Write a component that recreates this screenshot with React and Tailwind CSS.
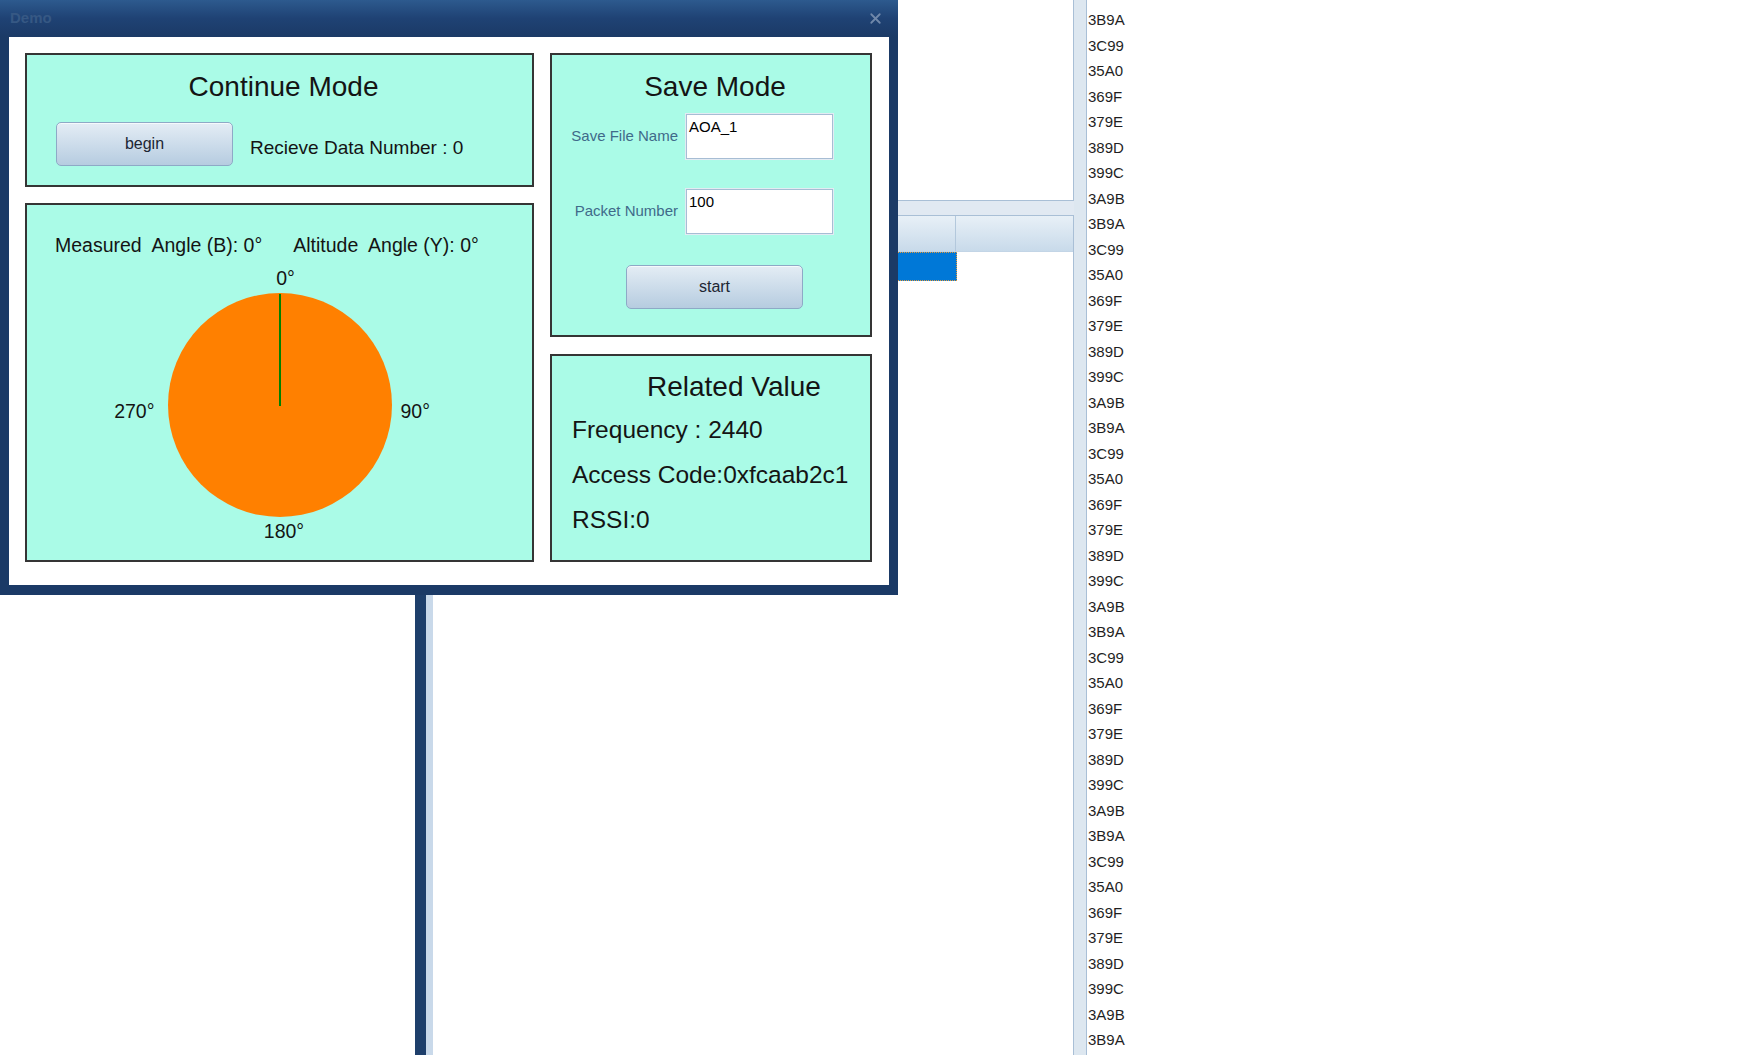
import { X } from "lucide-react";

const HEX = ["3B9A", "3C99", "35A0", "369F", "379E", "389D", "399C", "3A9B"];

const panel = "border-2 border-[#353535] bg-[#aafbe7]";
const btn =
  "flex h-[44px] w-[177px] items-center justify-center rounded-[5px] border border-[#8ea9c6] bg-gradient-to-b from-[#e4edf5] to-[#b6cce0] text-[16px] text-[#1c2633] shadow-[inset_0_1px_0_#f6f9fc]";
const textbox =
  "h-[45px] w-[147px] border border-[#a7bdd4] bg-white pl-[2px] pt-[3px] text-[15px] leading-[18px] text-black shadow-[0_0_0_1px_#e3ebf3]";

function Compass() {
  return (
    <svg width="224" height="224" viewBox="0 0 224 224">
      <circle cx="112" cy="112" r="112" fill="#ff8000" />
      <line x1="112" y1="1" x2="112" y2="113" stroke="#008000" strokeWidth="2" />
    </svg>
  );
}

export default function App() {
  const rows = Array.from({ length: 41 }, (_, i) => HEX[i % 8]);

  return (
    <div className="relative h-[1055px] w-[1755px] overflow-hidden bg-white font-['Liberation_Sans',Arial,sans-serif] text-[#141414]">
      {/* host app behind the dialog */}
      <div className="flex h-full">
        <div className="flex w-[1074px] flex-col bg-[#e1e9f2]">
          <div className="h-[201px] border-b border-r border-[#a9bfd6] bg-white" />
          <div className="h-[14px]" />
          <div className="flex flex-1 flex-col border-r border-t border-[#a9bfd6] bg-white">
            <div className="flex h-[36px] border-b border-[#c3d5e6] bg-gradient-to-b from-[#e8f0f7] to-[#c8daea]">
              <div className="w-[956px] border-r border-[#b3c8dc]" />
              <div className="flex-1" />
            </div>
            <div className="flex h-[29px]">
              <div className="w-[857px]" />
              <div className="w-[100px] border border-dotted border-[#e59a3c] bg-[#0078d7]" />
            </div>
            <div className="flex flex-1">
              <div className="w-[415px]" />
              <div className="w-[11px] bg-[#1e3f6b]" />
              <div className="w-[7px] bg-[#c9d9ea]" />
            </div>
          </div>
        </div>
        <div className="w-[13px] border-r border-[#a9bfd6] bg-[#dde7f0]" />
        <div className="pl-[1px] pt-[7px] text-[15px] leading-[25.5px] text-[#1f1f1f]">
          {rows.map((h, i) => (
            <div key={i}>{h}</div>
          ))}
        </div>
      </div>

      {/* Demo dialog */}
      <div className="absolute left-0 top-0 flex h-[595px] w-[898px] flex-col bg-[#1b3a66]">
        <div className="flex h-[37px] items-center justify-between bg-gradient-to-b from-[#2d5a8e] via-[#1f4274] to-[#1b3a66] pl-[10px] pr-[14px]">
          <span className="text-[15px] font-bold text-[#365884]">Demo</span>
          <X size={17} strokeWidth={2.5} className="text-[#7088aa]" />
        </div>

        <div className="mx-[9px] mb-[10px] flex flex-1 gap-4 bg-white pl-4 pt-4">
          {/* left column */}
          <div className="flex w-[509px] flex-col gap-4">
            <div className={`flex h-[134px] flex-col ${panel}`}>
              <div className="pl-2 pt-[16px] text-center text-[28px] leading-[32px]">
                Continue Mode
              </div>
              <div className="mt-[19px] flex items-center pl-[29px]">
                <button className={btn}>begin</button>
                <span className="ml-[17px] mt-[8px] text-[19px]">Recieve Data Number : 0</span>
              </div>
            </div>

            <div className={`flex h-[359px] flex-col ${panel}`}>
              <div className="flex whitespace-pre pl-[28px] pt-[29px] text-[19.5px] leading-[22px]">
                <span>Measured  Angle (B): 0°</span>
                <span className="ml-[31px]">Altitude  Angle (Y): 0°</span>
              </div>
              <div className="mt-[11px] self-center pl-[12px] text-[19.5px] leading-[22px]">0°</div>
              <div className="mt-[4px] grid grid-cols-[1fr_224px_1fr] text-[19.5px] leading-[22px]">
                <div className="flex items-center justify-end pr-[13px] pt-[12px]">270°</div>
                <Compass />
                <div className="flex items-center pl-[9px] pt-[12px]">90°</div>
              </div>
              <div className="mt-[3px] self-center pl-[9px] text-[19.5px] leading-[22px]">180°</div>
            </div>
          </div>

          {/* right column */}
          <div className="flex w-[322px] flex-col gap-[17px]">
            <div className={`flex h-[284px] flex-col ${panel}`}>
              <div className="pl-2 pt-[16px] text-center text-[28px] leading-[32px]">Save Mode</div>
              <div className="mt-[11px] flex items-center">
                <span className="w-[126px] text-right text-[15px] text-[#3f6a8a]">Save File Name</span>
                <div className={`ml-[8px] ${textbox}`}>AOA_1</div>
              </div>
              <div className="mt-[30px] flex items-center">
                <span className="w-[126px] text-right text-[15px] text-[#3f6a8a]">Packet Number</span>
                <div className={`ml-[8px] ${textbox}`}>100</div>
              </div>
              <button className={`mt-[31px] ml-[7px] self-center ${btn}`}>start</button>
            </div>

            <div className={`flex h-[208px] flex-col ${panel}`}>
              <div className="pl-[95px] pt-[15px] text-[28px] leading-[32px]">Related Value</div>
              <div className="mt-[4px] pl-[20px] text-[24.5px] leading-[45px]">
                <div>Frequency : 2440</div>
                <div>Access Code:0xfcaab2c1</div>
                <div>RSSI:0</div>
              </div>
            </div>
          </div>
        </div>
      </div>
    </div>
  );
}
